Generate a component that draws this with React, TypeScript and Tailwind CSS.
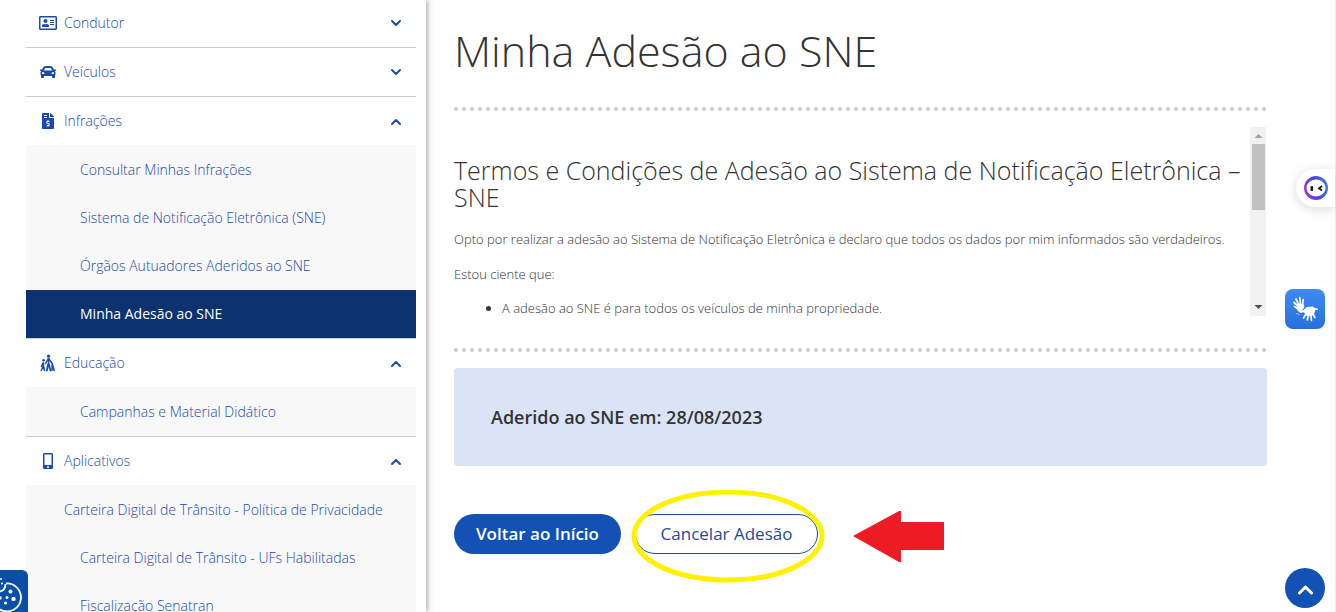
import React, { useState } from 'react';
import { FaCar, FaFileInvoiceDollar, FaMobileAlt, FaRegAddressCard } from 'react-icons/fa';
import clsx from 'clsx';

const FamilyIcon: React.FC = () => (
  <svg width="16" height="18" viewBox="0 0 16 18" fill="none" stroke="currentColor" strokeLinecap="round" strokeLinejoin="round">
    <circle cx="8.5" cy="2.2" r="1.6" fill="currentColor" stroke="none" />
    <circle cx="3.6" cy="6.2" r="1.3" fill="currentColor" stroke="none" />
    <path d="M8.5 5v5M8.3 10 6.8 16.5M8.8 10l1.7 6.500" strokeWidth="1.8" />
    <path d="M8 5 5.500 9.500M9 5l3.200 4.500 2 7M12.200 10.500l-.2 6" strokeWidth="1.5" />
    <path d="M3.400 8.800v3.500M3.400 12 1.200 16.500M3.600 12l.9 4.500M3 9 1.400 12.500" strokeWidth="1.5" />
  </svg>
);

const HandsIcon: React.FC = () => (
  <svg width="40" height="40" viewBox="0 0 40 40" fill="none" stroke="#fff" strokeLinecap="round" strokeLinejoin="round">
    <path d="M13 17 9 13.5M14 16 11 10M15.500 15.500 14.800 8.500M17.500 16 18.300 10.500M13 20 9.500 17.500" strokeWidth="1.7" />
    <path d="M12.500 16.500 17.800 15l1.200 3-3.500 5.500-2.500-2Z" fill="#fff" strokeWidth="1" />
    <path d="M18 22 22 18.500l6-.5 2 3-2 5-6 1-2-3Z" fill="#fff" strokeWidth="1" />
    <path d="M21 25 18.500 29M23.500 26 22.300 31M26 26l.4 5.500M28 24.500l1.800 4M20 21.500 16.500 23M29 19.500l3 .8" strokeWidth="1.7" />
    <path d="m11.500 24.500 2.500 1" strokeWidth="1" opacity=".6" />
  </svg>
);

const CookieIcon: React.FC = () => (
  <svg width="28" height="42" viewBox="0 0 28 42" fill="none" stroke="#fff">
    <path d="M5.500 14c0 4-1 6.500-5.500 7.500M6 13.500A14 14 0 1 1-7 27" strokeWidth="1.8" />
    <g fill="#fff" stroke="none">
      <circle cx="10.5" cy="21.5" r="2" />
      <circle cx="13.5" cy="29" r="2.2" />
      <circle cx="7" cy="27.5" r="1.5" />
      <circle cx="5.5" cy="33" r="1.6" />
      <circle cx="0" cy="28" r="1.8" />
      <circle cx="1" cy="9" r="1" />
      <circle cx="2" cy="13.5" r="1.1" />
    </g>
  </svg>
);

const AssistantIcon: React.FC = () => (
  <svg width="24" height="24" viewBox="0 0 24 24">
    <defs>
      <linearGradient id="ring" x1="0" y1="0.7" x2="1" y2="0.5">
        <stop offset="0" stopColor="#a43be0" />
        <stop offset="0.5" stopColor="#4b3fe0" />
        <stop offset="1" stopColor="#3b7fe0" />
      </linearGradient>
    </defs>
    <circle cx="12" cy="12" r="12" fill="url(#ring)" />
    <ellipse cx="12" cy="12" rx="9.5" ry="8.5" fill="#fff" />
    <rect x="6.5" y="10" width="2.6" height="5" rx="1" fill="#16161d" />
    <path d="m18 10-3 2.500 3 2" fill="none" stroke="#16161d" strokeWidth="1.8" />
  </svg>
);

const Chevron: React.FC<{ up?: boolean; size?: number }> = ({ up, size = 10 }) => (
  <svg width={size} height={size} viewBox="0 0 10 10" fill="none" stroke="currentColor" strokeWidth="2" strokeLinecap="round" strokeLinejoin="round">
    <path d={up ? 'M1 8 5 4l4 4' : 'm1 3 4 4 4-4'} />
  </svg>
);

const menu = [
  { label: 'Condutor', icon: <FaRegAddressCard size={18} />, items: [] },
  { label: 'Veículos', icon: <FaCar size={16} />, items: [] },
  {
    label: 'Infrações',
    icon: <FaFileInvoiceDollar size={16} />,
    items: ['Consultar Minhas Infrações', 'Sistema de Notificação Eletrônica (SNE)', 'Órgãos Autuadores Aderidos ao SNE', 'Minha Adesão ao SNE'],
  },
  { label: 'Educação', icon: <FamilyIcon />, items: ['Campanhas e Material Didático'] },
  {
    label: 'Aplicativos',
    icon: <FaMobileAlt size={16} />,
    items: ['Carteira Digital de Trânsito - Política de Privacidade', 'Carteira Digital de Trânsito - UFs Habilitadas', 'Fiscalização Senatran'],
  },
];

const ACTIVE = 'Minha Adesão ao SNE';

const Sidebar: React.FC = () => {
  const [open, setOpen] = useState(['Infrações', 'Educação', 'Aplicativos']);

  const toggle = (label: string) =>
    setOpen(open.includes(label) ? open.filter((l) => l !== label) : [...open, label]);

  return (
    <aside className="w-[426px] shrink-0 bg-white pl-[26px] pr-[10px] shadow-[1px_0_6px_rgba(0,0,0,0.4)]">
      <nav className="-mt-px text-sm text-[#1a4bab]">
        {menu.map(({ label, icon, items }) => {
          const expanded = open.includes(label);
          return (
            <div key={label} className="border-b border-[#ccc]">
              <button
                onClick={() => toggle(label)}
                aria-expanded={expanded}
                className="flex h-12 w-full items-center pl-3 pr-[15px] text-left"
              >
                <span className="flex w-5 justify-center">{icon}</span>
                <span className="flex-1 pl-[6px]">{label}</span>
                <Chevron up={expanded} />
              </button>
              {expanded && items.length > 0 && (
                <ul className="bg-[#f8f8f8] pt-px">
                  {items.map((item) => (
                    <li key={item}>
                      <a
                        href="#"
                        className={clsx(
                          'flex h-12 items-center whitespace-nowrap',
                          item.length > 50 ? 'pl-[38px]' : 'pl-[54px]',
                          item === ACTIVE && 'bg-[#0c326f] font-normal text-white'
                        )}
                      >
                        {item}
                      </a>
                    </li>
                  ))}
                </ul>
              )}
            </div>
          );
        })}
      </nav>
    </aside>
  );
};

const Terms: React.FC = () => (
  <div className="mt-4 flex h-[189px]">
    <div className="flex-1 overflow-hidden pt-[30px] text-[13px] leading-5">
      <h2 className="text-[25px] leading-[27px]">
        Termos e Condições de Adesão ao Sistema de Notificação Eletrônica – SNE
      </h2>
      <p className="mt-[18px]">
        Opto por realizar a adesão ao Sistema de Notificação Eletrônica e declaro que todos os dados por mim informados são verdadeiros.
      </p>
      <p className="mt-[15px]">Estou ciente que:</p>
      <ul className="mt-[14px] list-disc pl-12">
        <li>A adesão ao SNE é para todos os veículos de minha propriedade.</li>
      </ul>
    </div>
    <div className="mr-px flex w-4 flex-col items-center bg-[#f1f1f1]">
      <svg width="16" height="17" viewBox="0 0 16 17" fill="#a3a3a3"><path d="m4.500 11 4-4 4 4Z" /></svg>
      <div className="h-[66px] w-[13px] bg-[#c1c1c1]" />
      <svg className="mt-auto" width="16" height="17" viewBox="0 0 16 17" fill="#505050"><path d="m4.500 6 4 4 4-4Z" /></svg>
    </div>
  </div>
);

const App: React.FC = () => (
  <div className="flex h-screen overflow-hidden bg-white font-['Open_Sans',sans-serif] font-light text-[#333]">
    <Sidebar />

    <main className="min-w-0 flex-1 border-r border-[#eee] pl-7 pr-[68px] pt-[27px]">
      <h1 className="text-[43px] leading-12">Minha Adesão ao SNE</h1>
      <hr className="mt-8 border-t-4 border-dotted border-[#ccc]" />
      <Terms />
      <hr className="mt-8 border-t-4 border-dotted border-[#ccc]" />

      <div className="mt-4 rounded bg-[#dae4f6] p-[37px] text-lg leading-6 font-semibold">
        Aderido ao SNE em: 28/08/2023
      </div>

      <div className="mt-12 flex gap-[14px] text-[17px]">
        <button className="h-10 w-[167px] rounded-full bg-[#1351b4] font-semibold text-white">Voltar ao Início</button>
        <div className="relative">
          <button className="h-10 w-[183px] rounded-full border border-[#1f4f8f] font-medium text-[#1f4a9c]">Cancelar Adesão</button>
          <svg className="pointer-events-none absolute -left-1 -top-6" width="314" height="94" viewBox="0 0 314 94">
            <ellipse cx="97" cy="46" rx="94" ry="44" fill="none" stroke="#fff200" strokeWidth="5" />
            <path d="M222 46 268 21h2v11h43v28h-43v12h-2Z" fill="#ed1c24" />
          </svg>
        </div>
      </div>
    </main>

    <button aria-label="Cookies" className="absolute bottom-0 left-0 overflow-hidden rounded-tr-md bg-[#0a4ea8]">
      <CookieIcon />
    </button>
    <button aria-label="Assistente" className="absolute right-px top-[169px] flex h-[38px] w-[39px] items-center rounded-l-full bg-white pl-2 shadow-[0_2px_12px_rgba(0,0,0,0.15)]">
      <AssistantIcon />
    </button>
    <button aria-label="Libras" className="absolute right-[11px] top-[289px] rounded-lg bg-gradient-to-b from-[#3d8bf2] to-[#2a6fdc]">
      <HandsIcon />
    </button>
    <button aria-label="Voltar ao topo" className="absolute bottom-1 right-[11px] flex size-10 items-center justify-center rounded-full bg-[#1351b4] text-white">
      <Chevron up size={15} />
    </button>
  </div>
);

export default App;
